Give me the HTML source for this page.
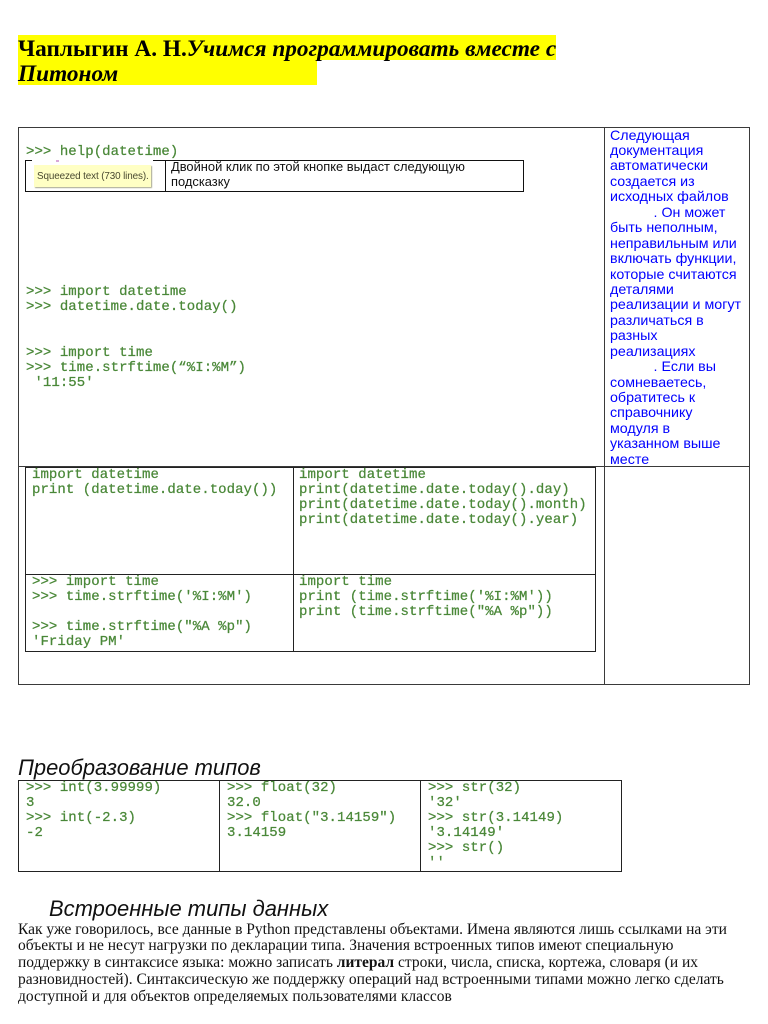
<!DOCTYPE html>
<html><head><meta charset="utf-8">
<style>
html,body{margin:0;padding:0;background:#fff}
#p{position:relative;width:768px;height:1024px;overflow:hidden;background:#fff}
.l{position:absolute;background:#3a3a3a}
.t{position:absolute;white-space:pre;margin:0}
.m{font:14px/15px "Liberation Mono",monospace;color:#4a8838;letter-spacing:.06px;-webkit-text-stroke:.25px #4a8838}
.b{font:14.25px/15px "Liberation Sans",sans-serif;color:#0000ff}
.s{font:15.5px/17px "Liberation Serif",serif;color:#111}
.h{font:italic 21.95px/24px "Liberation Sans",sans-serif;color:#111}
.y{position:absolute;background:#ffff00}
.k{font:bold 23.3px/25px "Liberation Serif",serif;color:#000}
</style></head><body><div id="p">
<div class="y" style="left:18px;top:35px;width:538px;height:25px"></div>
<div class="y" style="left:18px;top:60px;width:299px;height:25px"></div>
<div class="t k" style="left:18px;top:37px">Чаплыгин А. Н.<i>Учимся программировать вместе с</i></div>
<div class="t k" style="left:18px;top:62px"><i>Питоном</i></div>

<div class="l" style="left:18px;top:127px;width:732px;height:1px"></div>
<div class="l" style="left:18px;top:684px;width:732px;height:1px"></div>
<div class="l" style="left:18px;top:127px;width:1px;height:558px"></div>
<div class="l" style="left:749px;top:127px;width:1px;height:558px"></div>
<div class="l" style="left:604px;top:127px;width:1px;height:558px"></div>
<div class="l" style="left:18px;top:466px;width:732px;height:1px"></div>

<div class="t m" style="left:26px;top:145px">&gt;&gt;&gt; help(datetime)</div>
<div class="l" style="left:25px;top:160px;width:498px;height:1px;background:#111"></div>
<div class="l" style="left:25px;top:191px;width:499px;height:1px;background:#111"></div>
<div class="l" style="left:25px;top:160px;width:1px;height:32px;background:#111"></div>
<div class="l" style="left:523px;top:160px;width:1px;height:32px;background:#111"></div>
<div class="l" style="left:165px;top:160px;width:1px;height:32px;background:#111"></div>
<div style="position:absolute;left:32px;top:160px;width:121px;height:4px;background:#fff"></div>
<div style="position:absolute;left:56px;top:160px;width:3px;height:2px;background:#d9a8d9"></div>
<div style="position:absolute;left:34px;top:165px;width:117px;height:22px;background:#ffffc4;box-shadow:1px 1px 1px #a9a98f"></div>
<div class="t" style="left:37px;top:170px;font:9.9px/14px 'Liberation Sans',sans-serif;color:#4a4a30;letter-spacing:-.12px">Squeezed text (730 lines).</div>
<div class="t" style="left:171px;top:160px;font:12.9px/14.5px 'Liberation Sans',sans-serif;color:#111">Двойной клик по этой кнопке выдаст следующую
подсказку</div>

<div class="t m" style="left:26px;top:285px">&gt;&gt;&gt; import datetime
&gt;&gt;&gt; datetime.date.today()</div>
<div class="t m" style="left:26px;top:346px">&gt;&gt;&gt; import time
&gt;&gt;&gt; time.strftime(“%I:%M”)
 '11:55'</div>

<div class="t b" style="left:610px;top:128.6px;line-height:15.43px">Следующая
документация
автоматически
создается из
исходных файлов
           . Он может
быть неполным,
неправильным или
включать функции,
которые считаются
деталями
реализации и могут
различаться в
разных
реализациях
           . Если вы
сомневаетесь,
обратитесь к
справочнику
модуля в
указанном выше
месте</div>

<div class="l" style="left:25px;top:467px;width:571px;height:1px;background:#222"></div>
<div class="l" style="left:25px;top:574px;width:571px;height:1px;background:#222"></div>
<div class="l" style="left:25px;top:651px;width:571px;height:1px;background:#222"></div>
<div class="l" style="left:25px;top:467px;width:1px;height:185px;background:#222"></div>
<div class="l" style="left:293px;top:467px;width:1px;height:185px;background:#222"></div>
<div class="l" style="left:595px;top:467px;width:1px;height:185px;background:#222"></div>
<div class="t m" style="left:32px;top:468px">import datetime
print (datetime.date.today())</div>
<div class="t m" style="left:299px;top:468px">import datetime
print(datetime.date.today().day)
print(datetime.date.today().month)
print(datetime.date.today().year)</div>
<div class="t m" style="left:32px;top:575px">&gt;&gt;&gt; import time
&gt;&gt;&gt; time.strftime('%I:%M')

&gt;&gt;&gt; time.strftime("%A %p")
'Friday PM'</div>
<div class="t m" style="left:299px;top:575px">import time
print (time.strftime('%I:%M'))
print (time.strftime("%A %p"))</div>

<div class="t h" style="left:18px;top:756px">Преобразование типов</div>
<div class="l" style="left:18px;top:780px;width:604px;height:1px;background:#222"></div>
<div class="l" style="left:18px;top:871px;width:604px;height:1px;background:#222"></div>
<div class="l" style="left:18px;top:780px;width:1px;height:92px;background:#222"></div>
<div class="l" style="left:219px;top:780px;width:1px;height:92px;background:#222"></div>
<div class="l" style="left:420px;top:780px;width:1px;height:92px;background:#222"></div>
<div class="l" style="left:621px;top:780px;width:1px;height:92px;background:#222"></div>
<div class="t m" style="left:26px;top:781px">&gt;&gt;&gt; int(3.99999)
3
&gt;&gt;&gt; int(-2.3)
-2</div>
<div class="t m" style="left:227px;top:781px">&gt;&gt;&gt; float(32)
32.0
&gt;&gt;&gt; float("3.14159")
3.14159</div>
<div class="t m" style="left:428px;top:781px">&gt;&gt;&gt; str(32)
'32'
&gt;&gt;&gt; str(3.14149)
'3.14149'
&gt;&gt;&gt; str()
''</div>

<div class="t h" style="left:49px;top:897px">Встроенные типы данных</div>
<div class="t s" style="left:18px;top:921.5px;line-height:16.8px">Как уже говорилось, все данные в Python представлены объектами. Имена являются лишь ссылками на эти
объекты и не несут нагрузки по декларации типа. Значения встроенных типов имеют специальную
поддержку в синтаксисе языка: можно записать <b>литерал</b> строки, числа, списка, кортежа, словаря (и их
разновидностей). Синтаксическую же поддержку операций над встроенными типами можно легко сделать
доступной и для объектов определяемых пользователями классов</div>
</div></body></html>
